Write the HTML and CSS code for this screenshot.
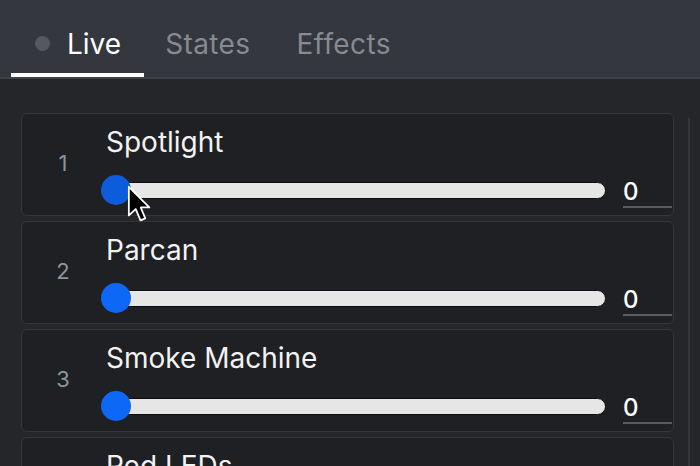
FILE: index.html
```html
<!DOCTYPE html>
<html>
<head>
<meta charset="utf-8">
<link rel="stylesheet" href="styles.css">
</head>
<body>
<div class="app">
  <header class="tabs">
    <div class="tab active"><span class="dot"></span><span>Live</span></div>
    <div class="tab">States</div>
    <div class="tab">Effects</div>
  </header>
  <main class="content">
    <div class="list">
      <div class="card">
        <div class="num">1</div>
        <div class="body">
          <div class="name">Spotlight</div>
          <div class="row">
            <div class="slider"><div class="track"></div><div class="thumb dim"></div></div>
            <div class="value">0</div>
          </div>
        </div>
      </div>
      <div class="card">
        <div class="num">2</div>
        <div class="body">
          <div class="name">Parcan</div>
          <div class="row">
            <div class="slider"><div class="track"></div><div class="thumb"></div></div>
            <div class="value">0</div>
          </div>
        </div>
      </div>
      <div class="card">
        <div class="num">3</div>
        <div class="body">
          <div class="name">Smoke Machine</div>
          <div class="row">
            <div class="slider"><div class="track"></div><div class="thumb"></div></div>
            <div class="value">0</div>
          </div>
        </div>
      </div>
      <div class="card">
        <div class="num">4</div>
        <div class="body">
          <div class="name">Red LEDs</div>
          <div class="row">
            <div class="slider"><div class="track"></div><div class="thumb"></div></div>
            <div class="value">0</div>
          </div>
        </div>
      </div>
    </div>
    <div class="scroll"></div>
  </main>
  <svg class="cursor" width="24" height="38" viewBox="0 0 13.5 21.5">
    <path d="M1,1 L1,17.2 L4.9,13.6 L7.6,20 L10.3,18.9 L7.7,12.7 L12.6,12.7 Z" fill="#000" stroke="#fff" stroke-width="1" stroke-linejoin="round"/>
  </svg>
</div>
</body>
</html>
```
FILE: styles.css
```css
* { box-sizing: border-box; }
html, body { margin: 0; padding: 0; }
body {
  background: #24262a;
  font-family: Inter, "Noto Sans", sans-serif;
  overflow: hidden;
}
.app {
  position: relative;
  width: 700px;
  height: 466px;
  overflow: hidden;
}
.tabs {
  height: 79px;
  background: #34373d;
  border-bottom: 2px solid #3f4248;
  display: flex;
  align-items: stretch;
  padding-left: 11px;
}
.tab {
  display: flex;
  align-items: flex-start;
  gap: 17px;
  padding: 27px 25px 0 21px;
  font-size: 28px;
  line-height: 34px;
  letter-spacing: 0.4px;
  color: #868a91;
}
.tab.active {
  color: #ffffff;
  padding: 27px 23px 0 24px;
  letter-spacing: 0;
  border-bottom: 4px solid #ffffff;
}
.dot {
  width: 15px;
  height: 15px;
  margin-top: 9px;
  border-radius: 50%;
  background: #55585e;
  display: inline-block;
}
.content {
  display: flex;
  padding: 34px 0 0 21px;
  gap: 14px;
}
.list {
  width: 653px;
  display: flex;
  flex-direction: column;
  gap: 5px;
}
.card {
  height: 103px;
  flex: none;
  background: #1e2023;
  border: 1px solid #33363b;
  border-radius: 6px;
  display: flex;
}
.num {
  width: 82px;
  align-self: center;
  text-align: center;
  color: #8d949c;
  font-size: 22px;
  margin-top: -4px;
}
.body {
  flex: 1;
  padding: 11px 1px 0 0;
  display: flex;
  flex-direction: column;
}
.name {
  font-size: 28px;
  line-height: 34px;
  color: #f2f2f2;
  padding-left: 2px;
}
.row {
  display: flex;
  align-items: center;
  margin-top: 17px;
  height: 28px;
}
.slider {
  position: relative;
  flex: 1;
  height: 28px;
  display: flex;
  align-items: center;
}
.track {
  width: 100%;
  height: 17px;
  background: #e6e6e6;
  border: 1px solid #0d0e10;
  border-radius: 9px;
}
.thumb {
  position: absolute;
  left: -3px;
  top: -1px;
  width: 30px;
  height: 30px;
  border-radius: 50%;
  background: #0d68f7;
}
.thumb.dim { background: #0c5cdb; }
.value {
  width: 49px;
  margin-left: 17px;
  font-size: 24px;
  font-weight: 500;
  color: #ffffff;
  line-height: 28px;
  border-bottom: 2px solid #575b62;
  margin-top: 6px;
}
.scroll {
  width: 12px;
  margin-top: 5px;
  border-left: 2px solid #33363b;
  height: 400px;
}
.cursor {
  position: absolute;
  left: 127px;
  top: 185px;
}
```
